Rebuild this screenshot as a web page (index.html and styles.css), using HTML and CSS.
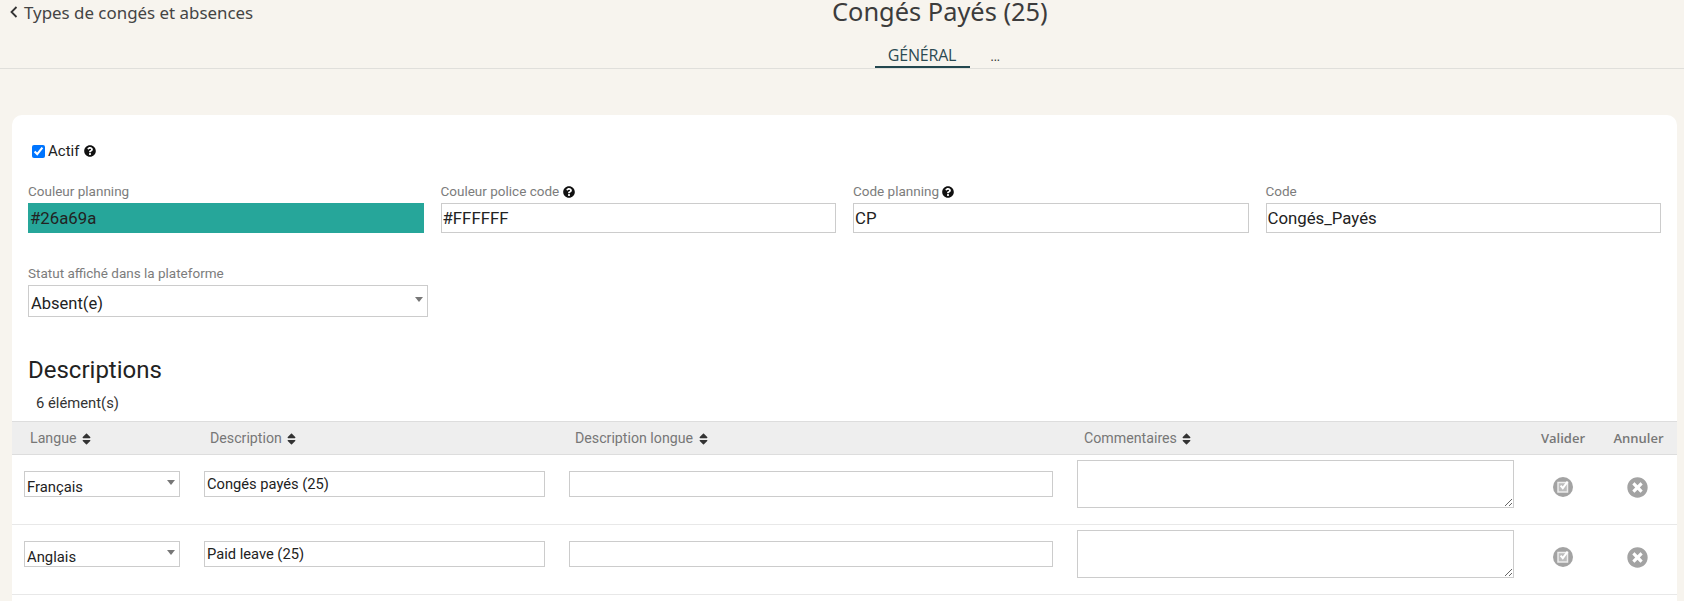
FILE: index.html
```html
<!DOCTYPE html>
<html lang="fr">
<head>
<meta charset="utf-8">
<title>Congés Payés (25)</title>
<link rel="stylesheet" href="styles.css">
</head>
<body>
<header class="top">
  <div class="top-row">
    <a class="back"><svg class="chev" viewBox="0 0 10 14"><path d="M7.5 2 2.5 7l5 5" fill="none" stroke="#333" stroke-width="1.8"/></svg>Types de congés et absences</a>
    <h1 class="title">Congés Payés (25)</h1>
    <span></span>
  </div>
  <nav class="tabs">
    <a class="tab active">GÉNÉRAL</a>
    <a class="tab more">...</a>
  </nav>
</header>
<main class="page">
  <section class="card">
    <div class="active-row">
      <input type="checkbox" class="check" checked>
      <span>Actif</span>
      <svg class="help" viewBox="0 0 512 512"><path d="M504 256c0 136.997-111.043 248-248 248S8 392.997 8 256C8 119.083 119.043 8 256 8s248 111.083 248 248zM262.655 90c-54.497 0-89.255 22.957-116.549 63.758-3.536 5.286-2.353 12.415 2.715 16.258l34.699 26.31c5.205 3.947 12.621 3.008 16.665-2.122 17.864-22.658 30.113-35.797 57.303-35.797 20.429 0 45.698 13.148 45.698 32.958 0 14.976-12.363 22.667-32.534 33.976C247.128 238.528 216 254.941 216 296v4c0 6.627 5.373 12 12 12h56c6.627 0 12-5.373 12-12v-1.333c0-28.462 83.186-29.647 83.186-106.667 0-58.002-60.165-102-116.531-102zM256 338c-25.365 0-46 20.635-46 46 0 25.364 20.635 46 46 46s46-20.636 46-46c0-25.365-20.635-46-46-46z"/></svg>
    </div>
    <div class="fields">
      <div class="field">
        <label class="lbl">Couleur planning</label>
        <input class="inp swatch" value="#26a69a">
      </div>
      <div class="field">
        <label class="lbl">Couleur police code <svg class="help" viewBox="0 0 512 512"><path d="M504 256c0 136.997-111.043 248-248 248S8 392.997 8 256C8 119.083 119.043 8 256 8s248 111.083 248 248zM262.655 90c-54.497 0-89.255 22.957-116.549 63.758-3.536 5.286-2.353 12.415 2.715 16.258l34.699 26.31c5.205 3.947 12.621 3.008 16.665-2.122 17.864-22.658 30.113-35.797 57.303-35.797 20.429 0 45.698 13.148 45.698 32.958 0 14.976-12.363 22.667-32.534 33.976C247.128 238.528 216 254.941 216 296v4c0 6.627 5.373 12 12 12h56c6.627 0 12-5.373 12-12v-1.333c0-28.462 83.186-29.647 83.186-106.667 0-58.002-60.165-102-116.531-102zM256 338c-25.365 0-46 20.635-46 46 0 25.364 20.635 46 46 46s46-20.636 46-46c0-25.365-20.635-46-46-46z"/></svg></label>
        <input class="inp" value="#FFFFFF">
      </div>
      <div class="field">
        <label class="lbl">Code planning <svg class="help" viewBox="0 0 512 512"><path d="M504 256c0 136.997-111.043 248-248 248S8 392.997 8 256C8 119.083 119.043 8 256 8s248 111.083 248 248zM262.655 90c-54.497 0-89.255 22.957-116.549 63.758-3.536 5.286-2.353 12.415 2.715 16.258l34.699 26.31c5.205 3.947 12.621 3.008 16.665-2.122 17.864-22.658 30.113-35.797 57.303-35.797 20.429 0 45.698 13.148 45.698 32.958 0 14.976-12.363 22.667-32.534 33.976C247.128 238.528 216 254.941 216 296v4c0 6.627 5.373 12 12 12h56c6.627 0 12-5.373 12-12v-1.333c0-28.462 83.186-29.647 83.186-106.667 0-58.002-60.165-102-116.531-102zM256 338c-25.365 0-46 20.635-46 46 0 25.364 20.635 46 46 46s46-20.636 46-46c0-25.365-20.635-46-46-46z"/></svg></label>
        <input class="inp" value="CP">
      </div>
      <div class="field">
        <label class="lbl">Code</label>
        <input class="inp" value="Congés_Payés">
      </div>
    </div>
    <div class="status">
      <label class="lbl">Statut affiché dans la plateforme</label>
      <div class="sel sel-big"><select><option>Absent(e)</option></select></div>
    </div>
    <h2 class="sub">Descriptions</h2>
    <div class="count">6 élément(s)</div>
    <div class="thead grid">
      <div class="th">Langue <svg class="sort" viewBox="0 0 320 512"><path d="M41 288h238c21.4 0 32.1 25.9 17 41L177 448c-9.4 9.4-24.6 9.4-33.9 0L24 329c-15.1-15.1-4.4-41 17-41zm255-105L177 64c-9.4-9.4-24.6-9.4-33.9 0L24 183c-15.1 15.1-4.4 41 17 41h238c21.4 0 32.1-25.9 17-41z"/></svg></div>
      <div class="th">Description <svg class="sort" viewBox="0 0 320 512"><path d="M41 288h238c21.4 0 32.1 25.9 17 41L177 448c-9.4 9.4-24.6 9.4-33.9 0L24 329c-15.1-15.1-4.4-41 17-41zm255-105L177 64c-9.4-9.4-24.6-9.4-33.9 0L24 183c-15.1 15.1-4.4 41 17 41h238c21.4 0 32.1-25.9 17-41z"/></svg></div>
      <div class="th">Description longue <svg class="sort" viewBox="0 0 320 512"><path d="M41 288h238c21.4 0 32.1 25.9 17 41L177 448c-9.4 9.4-24.6 9.4-33.9 0L24 329c-15.1-15.1-4.4-41 17-41zm255-105L177 64c-9.4-9.4-24.6-9.4-33.9 0L24 183c-15.1 15.1-4.4 41 17 41h238c21.4 0 32.1-25.9 17-41z"/></svg></div>
      <div class="th">Commentaires <svg class="sort" viewBox="0 0 320 512"><path d="M41 288h238c21.4 0 32.1 25.9 17 41L177 448c-9.4 9.4-24.6 9.4-33.9 0L24 329c-15.1-15.1-4.4-41 17-41zm255-105L177 64c-9.4-9.4-24.6-9.4-33.9 0L24 183c-15.1 15.1-4.4 41 17 41h238c21.4 0 32.1-25.9 17-41z"/></svg></div>
      <div class="th act">Valider</div>
      <div class="th act">Annuler</div>
    </div>
    <div class="row grid">
      <div class="sel sel-sm"><select><option>Français</option></select></div>
      <input class="cell-inp" value="Congés payés (25)">
      <input class="cell-inp" value="">
      <textarea class="area"></textarea>
      <svg class="ico" viewBox="0 0 20 20"><circle cx="10" cy="10" r="10" fill="#a3a3a3"/><path d="M5 5.5h9.5v9.5H5z" fill="#bdbdbd" stroke="#ececec" stroke-width="1.5"/><path d="M7.6 8.6l2.2 2.6L14.6 4.6" fill="none" stroke="#fff" stroke-width="2"/></svg>
      <svg class="ico ico-x" viewBox="0 0 512 512"><path fill="#a3a3a3" d="M256 8C119 8 8 119 8 256s111 248 248 248 248-111 248-248S393 8 256 8zm121.6 313.1c4.7 4.7 4.7 12.3 0 17L338 377.6c-4.7 4.7-12.3 4.7-17 0L256 312l-65.1 65.6c-4.7 4.7-12.3 4.7-17 0L134.4 338c-4.7-4.7-4.7-12.3 0-17l65.6-65-65.6-65.1c-4.7-4.7-4.7-12.3 0-17l39.6-39.6c4.7-4.7 12.3-4.7 17 0l65 65.7 65.1-65.6c4.7-4.7 12.3-4.7 17 0l39.6 39.6c4.7 4.7 4.7 12.3 0 17L312 256l65.6 65.1z"/></svg>
    </div>
    <div class="row grid">
      <div class="sel sel-sm"><select><option>Anglais</option></select></div>
      <input class="cell-inp" value="Paid leave (25)">
      <input class="cell-inp" value="">
      <textarea class="area"></textarea>
      <svg class="ico" viewBox="0 0 20 20"><circle cx="10" cy="10" r="10" fill="#a3a3a3"/><path d="M5 5.5h9.5v9.5H5z" fill="#bdbdbd" stroke="#ececec" stroke-width="1.5"/><path d="M7.6 8.6l2.2 2.6L14.6 4.6" fill="none" stroke="#fff" stroke-width="2"/></svg>
      <svg class="ico ico-x" viewBox="0 0 512 512"><path fill="#a3a3a3" d="M256 8C119 8 8 119 8 256s111 248 248 248 248-111 248-248S393 8 256 8zm121.6 313.1c4.7 4.7 4.7 12.3 0 17L338 377.6c-4.7 4.7-12.3 4.7-17 0L256 312l-65.1 65.6c-4.7 4.7-12.3 4.7-17 0L134.4 338c-4.7-4.7-4.7-12.3 0-17l65.6-65-65.6-65.1c-4.7-4.7-4.7-12.3 0-17l39.6-39.6c4.7-4.7 12.3-4.7 17 0l65 65.7 65.1-65.6c4.7-4.7 12.3-4.7 17 0l39.6 39.6c4.7 4.7 4.7 12.3 0 17L312 256l65.6 65.1z"/></svg>
    </div>
  </section>
</main>
</body>
</html>
```
FILE: styles.css
```css
* { box-sizing: border-box; }
html, body { margin: 0; height: 601px; overflow: hidden; }
body { background: #f7f4ee; font-family: Roboto, "Liberation Sans", sans-serif; color: #222; }

.top { height: 69px; border-bottom: 1px solid #e0dfdb; display: flex; flex-direction: column; }
.top-row { display: grid; grid-template-columns: 832px auto 1fr; height: 41px; }
.back { display: flex; align-items: center; height: 24px; padding-left: 9px; gap: 5px; font-family: "Noto Sans", sans-serif; font-size: 16.9px; color: #444; }
.chev { width: 10px; height: 14px; }
.title { margin: 0; font-family: "Noto Sans", sans-serif; font-weight: 400; font-size: 25.4px; line-height: 22px; color: #3c3c3c; }
.tabs { display: flex; justify-content: center; padding-left: 181px; }
.tab { font-family: "Open Sans", sans-serif; height: 27px; line-height: 28px; font-size: 16px; color: #2c4a52; }
.tab.active { width: 95px; text-align: center; border-bottom: 2px solid #23474f; margin-right: 21px; letter-spacing: -0.2px; }
.tab.more { width: 12px; font-size: 12px; margin-right: -12px; line-height: 31px; color: #333; }

.page { padding: 46px 7px 0 12px; }
.card { background: #fff; border-radius: 10px 10px 0 0; height: 486px; overflow: hidden; }

.active-row { display: flex; align-items: center; height: 18px; margin-top: 27px; padding-left: 20px; font-size: 15px; color: #222; }
.check { margin: 0 3px 0 0; width: 13px; height: 13px; }
.help { width: 12px; height: 12px; fill: #111; vertical-align: -1.5px; }
.active-row .help { margin-left: 5px; }

.fields { display: grid; grid-template-columns: repeat(4, 1fr); column-gap: 17px; padding: 0 16px; margin-top: 21px; }
.field, .status { display: flex; flex-direction: column; }
.lbl { font-size: 13.5px; line-height: 20px; height: 20px; color: #7c7c7c; margin-bottom: 2px; }
.inp { width: 100%; height: 30px; border: 1px solid #ccc; padding: 0 1px; font: 16.8px Roboto, sans-serif; color: #222; background: #fff; border-radius: 0; outline: 0; }
.swatch { background: #26a69a; border-color: #26a69a; }

.status { margin-top: 30px; padding-left: 16px; width: 416px; }
.sel { position: relative; }
.sel select { appearance: none; width: 100%; height: 100%; border: 1px solid #ccc; border-radius: 0; background: #fff; padding: 0 2px; font: 16.5px Roboto, sans-serif; color: #222; outline: 0; }
.sel::after { content: ""; position: absolute; top: 11px; right: 5px; border: 4px solid transparent; border-top: 5px solid #777; border-bottom: 0; }
.sel-big { height: 32px; }
.sel-big select { padding-top: 5px; }
.sel-big::after { right: 5px; top: 12px; }
.sel-sm { width: 156px; height: 26px; }
.sel-sm select { font-size: 14.8px; padding-top: 5px; }
.sel-sm::after { top: 9px; right: 5px; }

.sub { margin: 37px 0 0 16px; font-size: 24px; font-weight: 400; line-height: 32px; color: #222; }
.count { margin: 7px 0 0 24px; font-size: 14.8px; line-height: 20px; height: 21px; color: #333; }

.grid { display: grid; grid-template-columns: 180px 365px 508px 461px 74px 77px; }
.thead { height: 34px; background: #eee; border-top: 1px solid #ddd; border-bottom: 1px solid #ddd; align-items: center; margin-top: 7px; }
.th { padding-left: 18px; font-size: 14.2px; color: #777; }
.th:nth-child(4) { padding-left: 19px; }
.th.act { padding: 0; text-align: center; font-family: "Open Sans", sans-serif; font-weight: 600; font-size: 13px; color: #777; }
.sort { width: 9px; height: 14px; fill: #333; vertical-align: -2.5px; margin-left: 2px; }

.row { height: 70px; border-bottom: 1px solid #e8e8e8; align-items: start; }
.row > .sel { margin: 16px 0 0 12px; }
.cell-inp { margin: 16px 12px 0; width: calc(100% - 24px); height: 26px; border: 1px solid #ccc; padding: 0 2px; font: 14.7px Roboto, sans-serif; color: #222; border-radius: 0; outline: 0; background: #fff; }
.area { margin: 5px 12px 0; width: calc(100% - 24px); height: 48px; border: 1px solid #ccc; border-radius: 0; outline: 0; background: #fff; display: block; }
.ico { width: 20px; height: 20px; justify-self: center; margin-top: 22px; }
.ico-x { width: 21px; height: 21px; margin-right: 2px; }
```
